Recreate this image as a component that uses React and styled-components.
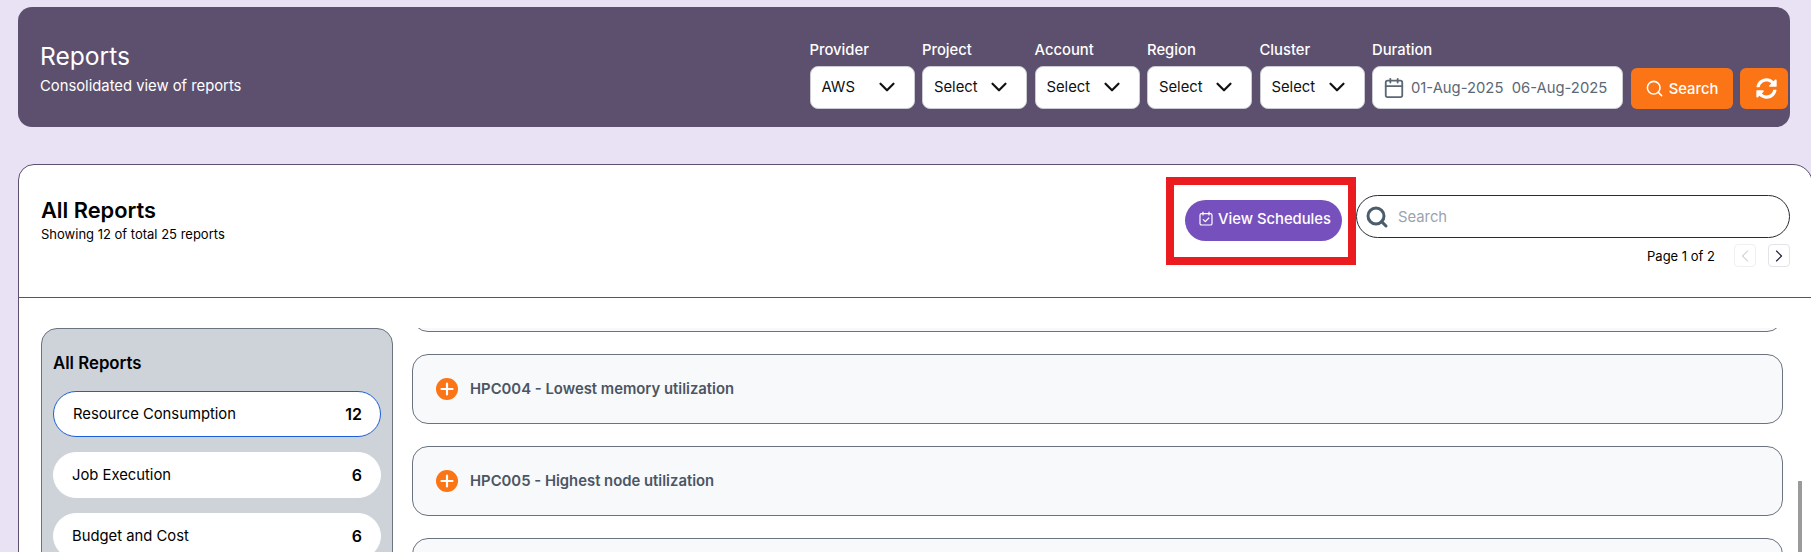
import React from "react";
import styled, { createGlobalStyle } from "styled-components";
import { ChevronDown, ChevronLeft, ChevronRight, Calendar, Search } from "lucide-react";
import { FaSyncAlt } from "react-icons/fa";

const Global = createGlobalStyle`
  html, body { margin: 0; padding: 0; height: 552px; overflow: hidden; background: #e9e1f4; }
  body { font-family: Inter, "Liberation Sans", sans-serif; color: #000; }
  * { box-sizing: border-box; }
`;

const Page = styled.div`
  width: 1811px;
  height: 552px;
  padding: 7px 0 0 18px;
  overflow: hidden;
  position: relative;
`;

const Header = styled.header`
  width: 1772px;
  height: 120px;
  background: #5d4f6e;
  border-radius: 14px;
  display: flex;
  align-items: flex-start;
  justify-content: space-between;
  padding: 34px 2px 0 22px;
  color: #fff;
`;

const TitleBlock = styled.div`
  display: flex;
  flex-direction: column;
`;

const PageTitle = styled.h1`
  margin: 0;
  font-size: 24.6px;
  line-height: 30px;
  font-weight: 400;
`;

const PageSub = styled.p`
  margin: 5px 0 0;
  font-size: 14.8px;
  line-height: 20px;
`;

const Filters = styled.div`
  display: flex;
  align-items: flex-end;
  gap: 7.5px;
`;

const Field = styled.div`
  display: flex;
  flex-direction: column;
  gap: 7px;
`;

const FieldLabel = styled.label`
  font-size: 14.8px;
  line-height: 18px;
  font-weight: 500;
  color: #fff;
`;

const SelectBox = styled.div`
  width: 105px;
  height: 43px;
  background: #fff;
  border: 1px solid #c9ccd3;
  border-radius: 8px;
  display: flex;
  align-items: center;
  justify-content: space-between;
  padding: 0 14px 1px 11px;
  font-size: 14.8px;
  color: #111;
  svg { flex: none; }
`;

const DateBox = styled.div`
  width: 251px;
  height: 43px;
  background: #fff;
  border: 1px solid #c9ccd3;
  border-radius: 8px;
  display: flex;
  align-items: center;
  gap: 6px;
  padding: 0 10px;
  font-size: 14.8px;
  color: #5b6875;
  white-space: pre;
  svg { color: #5b6875; flex: none; }
`;

const OrangeButton = styled.button`
  height: 41px;
  width: ${(p) => p.$w}px;
  border: none;
  border-radius: 6px;
  background: #fb7415;
  color: #fff;
  font: 500 14.8px Inter, sans-serif;
  display: flex;
  align-items: center;
  justify-content: center;
  gap: 5px;
  padding: 0 0 0 ${(p) => p.$pl || 0}px;
`;

const Card = styled.section`
  width: 1795px;
  height: 500px;
  margin-top: 37px;
  background: #fff;
  border: 1px solid #5d4f6e;
  border-radius: 16px 20px 0 0;
`;

const Toolbar = styled.div`
  height: 133px;
  border-bottom: 1px solid #5d4f6e;
  display: flex;
  justify-content: space-between;
  padding: 0 22px 0 22px;
`;

const ToolbarTitle = styled.div`
  padding-top: 31px;
`;

const CardTitle = styled.h2`
  margin: 0;
  font-size: 21.8px;
  line-height: 28px;
  font-weight: 600;
`;

const CardSub = styled.p`
  margin: 2px 0 0;
  font-size: 13px;
  line-height: 16px;
`;

const ToolbarRight = styled.div`
  display: flex;
  align-items: flex-start;
  padding-top: 12px;
`;

const Highlight = styled.div`
  width: 190px;
  height: 88px;
  border: 8px solid #ea1c1f;
  display: flex;
  align-items: center;
  padding-left: 11px;
`;

const PillButton = styled.button`
  width: 157px;
  height: 41px;
  border: none;
  border-radius: 21px;
  background: #7651bd;
  color: #fff;
  font: 500 14.8px Inter, sans-serif;
  display: flex;
  align-items: center;
  gap: 5px;
  padding: 0 0 2px 14px;
  margin-top: -2px;
  svg { margin-top: -2px; }
`;

const SearchColumn = styled.div`
  width: 434px;
  display: flex;
  flex-direction: column;
  padding-top: 18px;
`;

const SearchBox = styled.div`
  height: 43px;
  border: 1px solid #2b2b33;
  border-radius: 22px;
  display: flex;
  align-items: center;
  gap: 9px;
  padding: 0 8px;
  font-size: 14.8px;
  color: #9aa3af;
  svg { color: #4b5c6b; }
`;

const Pager = styled.div`
  display: flex;
  align-items: center;
  justify-content: flex-end;
  margin-top: 6px;
  font-size: 13px;
`;

const PagerText = styled.span`
  margin-right: 19px;
`;

const PagerButton = styled.button`
  width: 22px;
  height: 23px;
  border: 1px solid ${(p) => (p.disabled ? "#eef0f2" : "#e1e4e8")};
  border-radius: 4px;
  background: #fff;
  color: ${(p) => (p.disabled ? "#b6bbc2" : "#1c1c3a")};
  padding: 0;
  margin-left: ${(p) => p.$ml || 0}px;
  display: flex;
  align-items: center;
  justify-content: center;
`;

const Body = styled.div`
  display: flex;
  align-items: flex-start;
  padding: 30px 0 0 22px;
  position: relative;
`;

const Sidebar = styled.aside`
  width: 352px;
  height: 300px;
  flex: none;
  background: #ced3da;
  border: 1px solid #6b7280;
  border-radius: 16px;
  padding: 23px 11px 0;
`;

const SidebarTitle = styled.h3`
  margin: 0 0 17px;
  font-size: 16.8px;
  line-height: 22px;
  font-weight: 600;
`;

const NavList = styled.div`
  display: flex;
  flex-direction: column;
  gap: 15px;
`;

const NavItem = styled.div`
  height: 46px;
  background: #fff;
  border: 1px solid ${(p) => (p.$active ? "#1d5fd6" : "#fff")};
  border-radius: 23px;
  display: flex;
  align-items: center;
  justify-content: space-between;
  padding: 0 18px 1px ${(p) => (p.$active ? 19 : 18)}px;
  font-size: 14.8px;
`;

const NavCount = styled.span`
  font-size: 16px;
  font-weight: 600;
`;

const ScrollArea = styled.div`
  width: 1371px;
  height: 300px;
  margin-left: 19px;
  overflow: hidden;
`;

const ReportList = styled.div`
  display: flex;
  flex-direction: column;
  gap: 22px;
  margin-top: -66px;
`;

const ReportRow = styled.div`
  height: 70px;
  flex: none;
  background: #f7f9fb;
  border: 1px solid #6b7280;
  border-radius: 16px;
  display: flex;
  align-items: center;
  gap: 12px;
  padding: 0 0 1px 23px;
  font-size: 14.85px;
  font-weight: 600;
  color: #4b5563;
`;

const ScrollThumb = styled.div`
  position: absolute;
  left: 1779px;
  top: 183px;
  width: 4px;
  height: 200px;
  background: #9a9a9a;
`;

const PlusIcon = () => (
  <svg width="22" height="22" viewBox="0 0 22 22" aria-hidden="true">
    <circle cx="11" cy="11" r="11" fill="#fb7415" />
    <path d="M11 5.5v11M5.5 11h11" stroke="#fff" strokeWidth="2.2" strokeLinecap="round" />
  </svg>
);

const ScheduleIcon = () => (
  <svg width="14" height="15" viewBox="0 0 14 15" fill="none" stroke="#fff" strokeWidth="1.2" aria-hidden="true">
    <rect x="1" y="2.6" width="12" height="11.4" rx="1.6" />
    <path d="M4 1v3M10 1v3" strokeLinecap="round" />
    <path d="M4.3 8.6l2 2 3.5-3.6" strokeLinecap="round" strokeLinejoin="round" />
  </svg>
);

const selects = [
  ["Provider", "AWS"],
  ["Project", "Select"],
  ["Account", "Select"],
  ["Region", "Select"],
  ["Cluster", "Select"],
];

const nav = [
  ["Resource Consumption", 12, true],
  ["Job Execution", 6],
  ["Budget and Cost", 6],
];

const reports = ["", "HPC004 - Lowest memory utilization", "HPC005 - Highest node utilization", ""];

export default function App() {
  return (
    <Page>
      <Global />
      <Header>
        <TitleBlock>
          <PageTitle>Reports</PageTitle>
          <PageSub>Consolidated view of reports</PageSub>
        </TitleBlock>
        <Filters>
          {selects.map(([label, value]) => (
            <Field key={label}>
              <FieldLabel>{label}</FieldLabel>
              <SelectBox>
                {value}
                <ChevronDown size={26} strokeWidth={2} color="#111" />
              </SelectBox>
            </Field>
          ))}
          <Field>
            <FieldLabel>Duration</FieldLabel>
            <DateBox>
              <Calendar size={22} strokeWidth={2} />
              {"01-Aug-2025  06-Aug-2025"}
            </DateBox>
          </Field>
          <OrangeButton $w={102}>
            <Search size={19} strokeWidth={2} />
            Search
          </OrangeButton>
          <OrangeButton $w={48} $pl={4}>
            <FaSyncAlt size={21} />
          </OrangeButton>
        </Filters>
      </Header>
      <Card>
        <Toolbar>
          <ToolbarTitle>
            <CardTitle>All Reports</CardTitle>
            <CardSub>Showing 12 of total 25 reports</CardSub>
          </ToolbarTitle>
          <ToolbarRight>
            <Highlight>
              <PillButton>
                <ScheduleIcon />
                View Schedules
              </PillButton>
            </Highlight>
            <SearchColumn>
              <SearchBox>
                <Search size={24} strokeWidth={3} />
                Search
              </SearchBox>
              <Pager>
                <PagerText>Page 1 of 2</PagerText>
                <PagerButton disabled>
                  <ChevronLeft size={24} strokeWidth={1.2} />
                </PagerButton>
                <PagerButton $ml={12}>
                  <ChevronRight size={24} strokeWidth={1.4} />
                </PagerButton>
              </Pager>
            </SearchColumn>
          </ToolbarRight>
        </Toolbar>
        <Body>
          <Sidebar>
            <SidebarTitle>All Reports</SidebarTitle>
            <NavList>
              {nav.map(([label, count, active]) => (
                <NavItem key={label} $active={active}>
                  {label}
                  <NavCount>{count}</NavCount>
                </NavItem>
              ))}
            </NavList>
          </Sidebar>
          <ScrollArea>
            <ReportList>
              {reports.map((r, i) => (
                <ReportRow key={i}>
                  {r && <PlusIcon />}
                  {r}
                </ReportRow>
              ))}
            </ReportList>
          </ScrollArea>
          <ScrollThumb />
        </Body>
      </Card>
    </Page>
  );
}
